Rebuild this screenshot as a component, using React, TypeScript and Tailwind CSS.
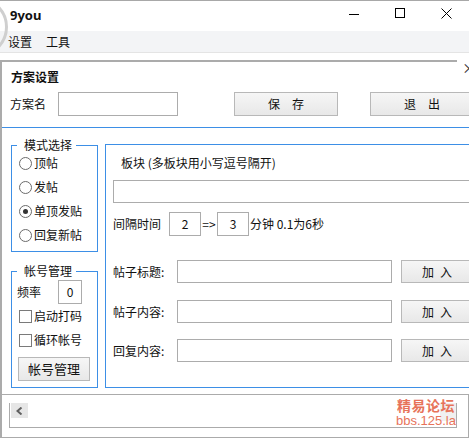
const BLUE = "#3d8fe6";

function Radio({ label, checked }: { label: string; checked?: boolean }) {
  return (
    <div className="flex items-center h-[24px]">
      <span className="w-[13px] h-[13px] rounded-full border border-[#6b6b6b] bg-white flex items-center justify-center shrink-0">
        {checked && <span className="w-[5px] h-[5px] rounded-full bg-[#333333]" />}
      </span>
      <span className="ml-[2px] text-[12px] leading-none">{label}</span>
    </div>
  );
}

function Check({ label }: { label: string }) {
  return (
    <div className="flex items-center h-[24px] pl-[7px]">
      <span className="w-[13px] h-[13px] border border-[#7a7a7a] bg-white shrink-0" />
      <span className="ml-[2px] text-[12px] leading-none">{label}</span>
    </div>
  );
}

function Input({ w, value }: { w: string; value?: string }) {
  return (
    <div
      className={`${w} h-[24px] border border-[#acacac] bg-white flex items-center justify-center text-[12px] shrink-0`}
    >
      {value}
    </div>
  );
}

function Btn({ label, className }: { label: string; className: string }) {
  return (
    <div
      className={`${className} border border-[#b8b8b8] bg-gradient-to-b from-[#f6f6f6] to-[#e8e8e8] flex items-center justify-center text-[12px] shrink-0 whitespace-pre`}
    >
      {label}
    </div>
  );
}

function Legend({ text }: { text: string }) {
  return (
    <span className="absolute -top-[9px] left-[5px] pl-[7px] pr-[4px] bg-white text-[12px] leading-[16px]">
      {text}
    </span>
  );
}

function PostRow({ label, mt }: { label: string; mt: string }) {
  return (
    <div className={`flex items-center ${mt}`}>
      <span className="w-[64px] text-[12px] shrink-0">{label}</span>
      <div className="w-[215px] h-[23px] border border-[#acacac] bg-white shrink-0" />
      <Btn label={"加\u2002入"} className="ml-[9px] w-[72px] h-[23px]" />
    </div>
  );
}

export default function App() {
  return (
    <div className="relative w-[469px] h-[438px] bg-white overflow-hidden text-[#111111] font-[family-name:'Noto_Sans_CJK_SC','Noto_Sans',sans-serif]">
      {/* title bar */}
      <div className="h-[31px] border-t border-[#a8a8a8] flex items-center">
        <span className="pl-[10px] text-[13px] font-bold font-[family-name:'Noto_Sans',sans-serif]">9you</span>
        <div className="ml-auto flex h-full">
          <div className="w-[46px] flex items-center justify-center">
            <div className="w-[10px] h-px bg-black mt-[-4px]" />
          </div>
          <div className="w-[46px] flex items-center justify-center">
            <div className="w-[10px] h-[10px] border border-black mt-[-6px]" />
          </div>
          <div className="w-[46px] flex items-center justify-center">
            <svg width="11" height="11" viewBox="0 0 11 11" className="mt-[-6px]">
              <path d="M0.5 0.5 L10.5 10.5 M10.5 0.5 L0.5 10.5" stroke="#000" strokeWidth="1" />
            </svg>
          </div>
        </div>
      </div>

      {/* menu bar */}
      <div className="h-[22px] bg-[#f3f4f6] border-b border-[#e4e4e4] flex items-center text-[12px] pl-[8px] gap-[14px]">
        <span>设置</span>
        <span>工具</span>
      </div>
      <div className="h-[7px]" />
      <div className="h-[2px] w-[457px] bg-[#ababab]" />

      {/* client area */}
      <div className="border-l-2 border-[#ababab] h-[376px] flex flex-col">
        <div className="mt-[7px] h-[16px] pl-[9px] text-[12px] font-bold leading-[16px]">方案设置</div>
        <div className="mt-[7px] flex items-center">
          <span className="pl-[8px] w-[56px] text-[12px] shrink-0">方案名</span>
          <Input w="w-[120px]" />
          <Btn label="保　存" className="ml-[56px] w-[104px] h-[24px]" />
          <Btn label="退　出" className="ml-[32px] w-[104px] h-[24px]" />
        </div>
        <div className="mt-[11px] h-px bg-[#3d8fe6]" />

        {/* main row */}
        <div className="h-[266px] flex">
          <div className="ml-[9px] w-[87px] shrink-0">
            <div className="relative mt-[17px] h-[107px] border border-[#3d8fe6] pt-[5px] pl-[7px]">
              <Legend text="模式选择" />
              <Radio label="顶帖" />
              <Radio label="发帖" />
              <Radio label="单顶发贴" checked />
              <Radio label="回复新帖" />
            </div>
            <div className="relative mt-[19px] h-[117px] border border-[#3d8fe6] pt-[8px]">
              <Legend text="帐号管理" />
              <div className="flex items-center">
                <span className="pl-[5px] w-[46px] text-[12px] shrink-0">频率</span>
                <Input w="w-[24px]" value="0" />
              </div>
              <Check label="启动打码" />
              <Check label="循环帐号" />
              <Btn label="帐号管理" className="mt-[5px] ml-[6px] w-[72px] h-[24px] text-[13px]" />
            </div>
          </div>

          <div className="ml-[7px] mt-[16px] h-[244px] w-[380px] shrink-0 border border-[#3d8fe6] pl-[7px]">
            <div className="mt-[10px] h-[16px] ml-[8px] text-[12px] leading-[16px]">板块 (多板块用小写逗号隔开)</div>
            <div className="mt-[9px] h-[23px] border border-[#acacac] bg-white" />
            <div className="mt-[9px] flex items-center">
              <span className="w-[56px] text-[12px] shrink-0">间隔时间</span>
              <Input w="w-[32px]" value="2" />
              <span className="w-[16px] text-[12px] text-center shrink-0">=&gt;</span>
              <Input w="w-[32px]" value="3" />
              <span className="ml-[1px] text-[12px]">分钟 0.1为6秒</span>
            </div>
            <PostRow label="帖子标题:" mt="mt-[24px]" />
            <PostRow label="帖子内容:" mt="mt-[17px]" />
            <PostRow label="回复内容:" mt="mt-[16px]" />
          </div>
        </div>

        {/* bottom scroll area */}
        <div className="h-[44px] w-[467px] border-t border-r border-b border-[#ababab]">
          <div className="ml-[7px] w-[448px] h-[25px] border-l border-r border-b border-[#ababab] relative">
            <div className="mt-[8px] ml-px w-[17px] h-[15px] bg-[#e6e6e6] flex items-center justify-center">
              <svg width="7" height="8" viewBox="0 0 7 8">
                <path d="M5.5 0.5 L1.5 4 L5.5 7.5" stroke="#606060" strokeWidth="2" fill="none" />
              </svg>
            </div>
            <div className="absolute right-0 top-0 w-[16px] h-[18px] bg-[#f0f0f0]" />
          </div>
        </div>
      </div>

      {/* decorations over the window */}
      <div className="absolute left-[-52px] top-[-3px] w-[60px] h-[60px] rounded-full border-[3px] border-[#cfcfcf] pointer-events-none" />
      <span className="absolute left-[462px] top-[60px] text-[14px] leading-none text-[#333333]">×</span>
      <div className="absolute left-[396px] top-[398px] flex flex-col items-center text-[#e7735a] font-bold pointer-events-none">
        <span className="text-[14px] leading-[15px] tracking-[0.5px]">精易论坛</span>
        <span className="text-[13px] leading-[13px] mt-[1px] font-[family-name:'Liberation_Sans',sans-serif] font-normal">bbs.125.la</span>
      </div>
    </div>
  );
}
